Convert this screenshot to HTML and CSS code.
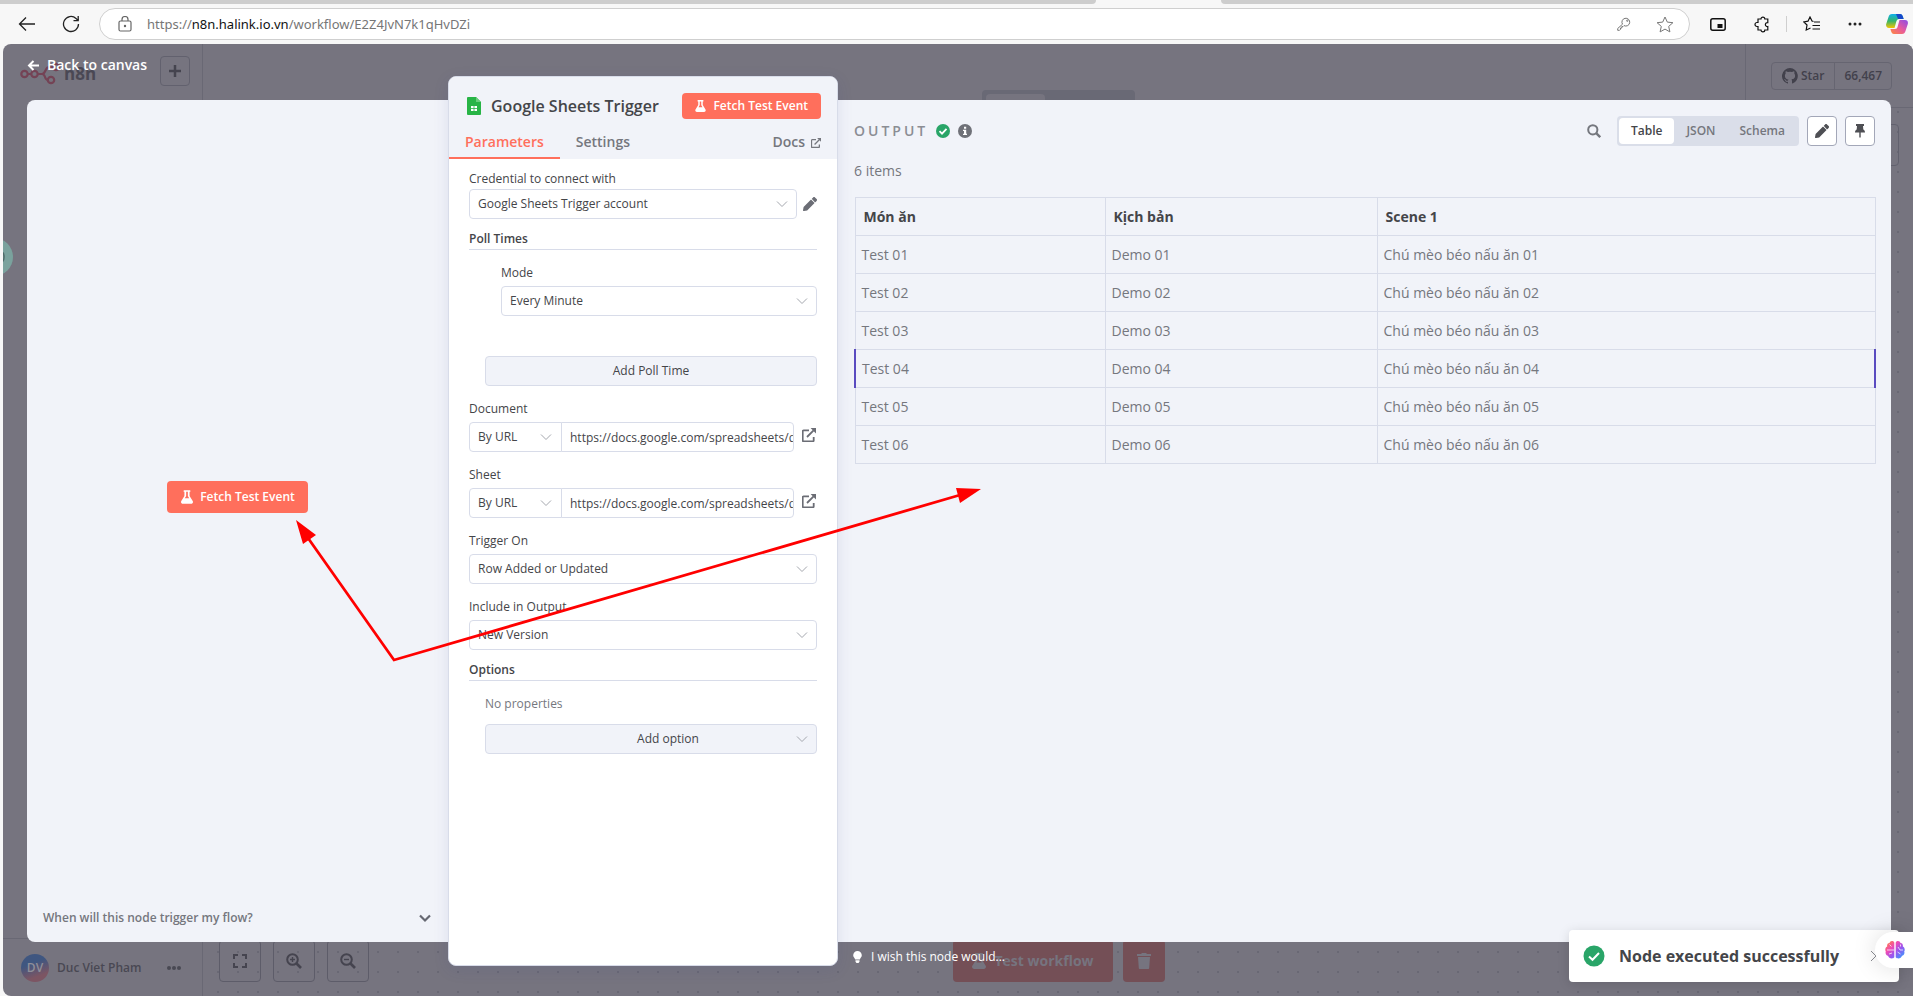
FILE: index.html
```html
<!DOCTYPE html>
<html lang="en">
<head>
<meta charset="utf-8">
<title>n8n - Google Sheets Trigger</title>
<link rel="stylesheet" href="styles.css">
</head>
<body>
<svg class="defs" aria-hidden="true">
  <symbol id="i-flask" viewBox="0 0 448 512"><path d="M437 404L320 215V64h8c13 0 24-11 24-24V24c0-13-11-24-24-24H120c-13 0-24 11-24 24v16c0 13 11 24 24 24h8v151L11 404c-29 47 5 108 60 108h306c55 0 89-61 60-108zM141 304l47-76c3-4 4-8 4-13V64h64v151c0 5 1 9 4 13l47 76z" fill="currentColor"/></symbol>
  <symbol id="i-pencil" viewBox="0 0 512 512"><path d="M498 142l-46 46c-5 5-13 5-17 0L324 77c-5-5-5-12 0-17l46-46c19-19 49-19 68 0l60 60c19 19 19 49 0 68zM284 100L22 362 0 486c-3 16 12 30 28 28l124-22 262-262c5-5 5-12 0-17L302 100c-5-5-13-5-18 0z" fill="currentColor"/></symbol>
  <symbol id="i-ext" viewBox="0 0 14 14"><path d="M7 2.3H1.6a.9.9 0 0 0-.9.9v9.2c0 .5.4.9.9.9h9.2c.5 0 .9-.4.9-.9V9M5 9l6.6-6.6" fill="none" stroke="currentColor" stroke-width="1.8"/><path d="M8.600 0H14v5.400z" fill="currentColor"/></symbol>
  <symbol id="i-chev" viewBox="0 0 12 12"><path d="M1 3.5l5 5 5-5" fill="none" stroke="currentColor"/></symbol>
</svg>

<header class="browser">
  <div class="tabstrip"><span></span><i></i><span></span></div>
  <div class="toolbar">
    <button class="nav" aria-label="Back"><svg width="18" height="16" viewBox="0 0 18 16" fill="none" stroke="#222" stroke-width="1.3"><path d="M17 8H2M8 1.5L1.5 8 8 14.500"/></svg></button>
    <button class="nav" aria-label="Refresh"><svg width="18" height="18" viewBox="0 0 18 18" fill="none" stroke="#222" stroke-width="1.3"><path d="M16.500 9A7.500 7.500 0 1 1 14 3.400L16 5.500M16.200 1v4.700h-4.700"/></svg></button>
    <div class="address">
      <svg width="14" height="16" viewBox="0 0 14 16" fill="none" stroke="#666" stroke-width="1.2"><rect x="1" y="5" width="12" height="10" rx="1.500"/><path d="M4 5V3.500a3 3 0 0 1 6 0V5"/><circle cx="7" cy="10" r=".6" fill="#555"/></svg>
      <p class="url">https://<b>n8n.halink.io.vn</b>/workflow/E2Z4JvN7k1qHvDZi</p>
      <svg width="14" height="14" viewBox="0 0 14 14" fill="none" stroke="#777"><path d="M5.500 7.200A3.900 3.900 0 1 1 7 8.600L6 9.600H4.800V11H3.500v1.300L2.500 13.300H.7V11.500z"/><circle cx="10.300" cy="3.700" r=".7"/></svg>
      <svg class="star" width="18" height="17" viewBox="0 0 18 17" fill="none" stroke="#777"><path d="M9 1l2.300 5.100 5.600.6-4.200 3.700 1.200 5.500L9 13.100 4.100 15.900l1.200-5.500L1.100 6.700l5.600-.6z"/></svg>
    </div>
    <div class="tools">
      <svg width="16" height="13" viewBox="0 0 16 13"><rect x=".8" y=".8" width="14.400" height="11.400" rx="2" fill="none" stroke="#111" stroke-width="1.500"/><rect x="7.500" y="6" width="5" height="4" fill="#111"/></svg>
      <svg width="16" height="17" viewBox="0 0 16 17" fill="none" stroke="#111" stroke-width="1.200"><path d="M4 3h3a1.900 1.900 0 0 1 3.800 0h3v3.600a2 2 0 1 0 0 3.900V14h-3a1.900 1.900 0 0 1-3.800 0H4v-3.500H3a2 2 0 0 1 0-4h1z"/></svg>
      <i class="sep"></i>
      <svg width="17" height="16" viewBox="0 0 17 16" fill="none" stroke="#111" stroke-width="1.200"><path d="M10.500 5.500L9 5 7 1 5 5.200l-4.200.7L4 9l-.8 5L7.500 12M11 6h6M9.500 9.500H17M9.500 13H17"/></svg>
      <svg width="14" height="4" viewBox="0 0 14 4" fill="#222"><circle cx="2" cy="2" r="1.500"/><circle cx="7" cy="2" r="1.500"/><circle cx="12" cy="2" r="1.500"/></svg>
      <svg class="copilot" width="22" height="20" viewBox="0 0 22 20">
        <defs><linearGradient id="c1" x2="0" y2="1"><stop stop-color="#0fb0ea"/><stop offset=".5" stop-color="#35b56a"/><stop offset="1" stop-color="#f5c400"/></linearGradient><linearGradient id="c2" x1="1" x2="0" y2="1"><stop stop-color="#8a4de8"/><stop offset=".5" stop-color="#e75a9e"/><stop offset="1" stop-color="#ff8a3c"/></linearGradient></defs>
        <path d="M6 0h8c2 0 2.500 1.500 3 3l.6 2H13c-1.500 0-2.200 1-2.600 2.300L8.500 14H3C.5 14-.3 12 .2 10L2.500 3C3.100 1 4 0 6 0z" fill="url(#c1)"/><path d="M10 0h4c2 0 2.500 1.500 3 3l.6 2H12z" fill="#1748c9"/>
        <path d="M16 20H8c-2 0-2.500-1.500-3-3l-.6-2H9c1.500 0 2.200-1 2.600-2.300L13.500 6H19c2.500 0 3.300 2 2.800 4L19.500 17c-.6 2-1.500 3-3.500 3z" fill="url(#c2)"/>
      </svg>
    </div>
  </div>
</header>

<main class="page">
  <div class="app">
    <aside class="sidebar">
      <div class="brand">
        <svg width="40" height="24" viewBox="0 0 40 24" fill="none" stroke="#744355" stroke-width="2.200"><circle cx="4.500" cy="13" r="3.200"/><circle cx="14.500" cy="13" r="3.200"/><circle cx="36" cy="6" r="3.200"/><circle cx="31" cy="19" r="3.200"/><path d="M8 13h3M18 13h4c4 0 3-7 7-7h4M22 13c4 0 2 6 6 6"/></svg>
        <b>n8n</b>
        <button aria-label="Add"><svg width="14" height="14" viewBox="0 0 14 14" stroke="#45444f" stroke-width="2.500"><path d="M7 1v12M1 7h12"/></svg></button>
      </div>
      <div class="user">
        <span class="avatar">DV</span><span>Duc Viet Pham</span>
        <svg width="14" height="4" viewBox="0 0 14 4" fill="#494853"><circle cx="2" cy="2" r="2"/><circle cx="7" cy="2" r="2"/><circle cx="12" cy="2" r="2"/></svg>
      </div>
    </aside>
    <section class="canvas">
      <div class="topbar">
        <div class="switch"><i></i></div>
        <div class="github"><span><svg width="16" height="16" viewBox="0 0 16 16" fill="#42414c"><path d="M8 0a8 8 0 0 0-2.500 15.600c.4 0 .5-.2.500-.4v-1.400c-2.200.5-2.700-1-2.700-1-.4-.9-.9-1.200-.9-1.200-.7-.5.100-.5.100-.5.800.1 1.200.8 1.200.8.700 1.300 1.900.9 2.300.7.100-.5.300-.9.500-1.100-1.800-.2-3.600-.9-3.600-4 0-.9.300-1.600.8-2.100-.1-.2-.4-1 .1-2.100 0 0 .7-.2 2.200.8a7.500 7.500 0 0 1 4 0c1.500-1 2.200-.8 2.200-.8.400 1.100.2 1.900.1 2.100.5.500.8 1.200.8 2.100 0 3.100-1.900 3.700-3.700 3.900.3.300.6.800.6 1.500v2.200c0 .2.100.5.600.4A8 8 0 0 0 8 0z"/></svg>Star</span><span>66,467</span></div>
      </div>
      <div class="edge"></div>
      <div class="controls">
        <button aria-label="Fit"><svg width="14" height="14" viewBox="0 0 14 14" fill="none" stroke="#45444f" stroke-width="2"><path d="M1 5V1h4M9 1h4v4M13 9v4H9M5 13H1V9"/></svg></button>
        <button aria-label="Zoom in"><svg width="16" height="16" viewBox="0 0 16 16" fill="none" stroke="#45444f" stroke-width="2"><circle cx="6.500" cy="6.500" r="5.300"/><path d="M10.500 10.500L15 15" stroke-width="2.600"/><path d="M6.500 4v5M4 6.500h5" stroke-width="1.400"/></svg></button>
        <button aria-label="Zoom out"><svg width="16" height="16" viewBox="0 0 16 16" fill="none" stroke="#45444f" stroke-width="2"><circle cx="6.500" cy="6.500" r="5.300"/><path d="M10.500 10.500L15 15" stroke-width="2.600"/><path d="M4 6.500h5" stroke-width="1.400"/></svg></button>
        <div class="run">
          <button class="red wide"><svg width="14" height="16"><use href="#i-flask"/></svg>Test workflow</button>
          <button class="red" aria-label="Delete"><svg width="14" height="16" viewBox="0 0 14 16" fill="currentColor"><path d="M0 1h4l1-1h4l1 1h4v2H0zM1 4h12l-.8 11c0 .6-.5 1-1 1H2.800c-.5 0-1-.4-1-1z"/></svg></button>
        </div>
      </div>
    </section>
    <i class="node"><svg width="38" height="38" viewBox="0 0 38 38" fill="none" stroke="#4e6a69" stroke-width="1.500"><path d="M26 14c4 0 4 10 0 10"/></svg></i>
  </div>

  <div class="overlay">
    <a class="back" href="#"><svg width="12" height="11" viewBox="0 0 12 11" fill="none" stroke="#fff" stroke-width="2"><path d="M12 5.500H2M6.500 1L2 5.500 6.500 10"/></svg>Back to canvas</a>
    <div class="modal">
      <section class="input">
        <div class="center"><button class="fetch tall"><svg width="12" height="14"><use href="#i-flask"/></svg>Fetch Test Event</button></div>
        <button class="help">When will this node trigger my flow?<svg width="12" height="12" viewBox="0 0 12 12" fill="none" stroke="#666872" stroke-width="2.200"><path d="M1 3.500l5 5 5-5"/></svg></button>
      </section>

      <section class="panel">
        <header>
          <div class="title">
            <svg width="14" height="18" viewBox="0 0 14 18"><path d="M1 0h8l5 5v12a1 1 0 0 1-1 1H1a1 1 0 0 1-1-1V1a1 1 0 0 1 1-1z" fill="#28b446"/><path d="M9 0l5 5H9z" fill="#6ace7c"/><path d="M4 9h6v5H4z" fill="#fff"/><path d="M4 11.500h6M7 9v5" stroke="#28b446" stroke-width=".8"/></svg>
            <h1>Google Sheets Trigger</h1>
            <button class="fetch"><svg width="11" height="12"><use href="#i-flask"/></svg>Fetch Test Event</button>
          </div>
          <nav class="tabs"><a class="on" href="#">Parameters</a><a href="#">Settings</a><a class="docs" href="#">Docs<svg width="10" height="10"><use href="#i-ext"/></svg></a></nav>
        </header>
        <form class="params">
          <label for="cred">Credential to connect with</label>
          <div class="row cred"><div class="sel"><select id="cred"><option>Google Sheets Trigger account</option></select><svg width="12" height="12"><use href="#i-chev"/></svg></div><svg class="act" width="14" height="14"><use href="#i-pencil"/></svg></div>
          <h2>Poll Times</h2>
          <div class="mode">
            <label for="mode">Mode</label>
            <div class="sel"><select id="mode"><option>Every Minute</option></select><svg width="12" height="12"><use href="#i-chev"/></svg></div>
          </div>
          <button type="button" class="add">Add Poll Time</button>
          <label for="doc">Document</label>
          <div class="row url-row"><div class="sel short"><select aria-label="Document mode"><option>By URL</option></select><svg width="12" height="12"><use href="#i-chev"/></svg></div><input id="doc" value="https://docs.google.com/spreadsheets/d/1"><svg class="act" width="14" height="14"><use href="#i-ext"/></svg></div>
          <label for="sheet">Sheet</label>
          <div class="row url-row"><div class="sel short"><select aria-label="Sheet mode"><option>By URL</option></select><svg width="12" height="12"><use href="#i-chev"/></svg></div><input id="sheet" value="https://docs.google.com/spreadsheets/d/1"><svg class="act" width="14" height="14"><use href="#i-ext"/></svg></div>
          <label for="on">Trigger On</label>
          <div class="sel"><select id="on"><option>Row Added or Updated</option></select><svg width="12" height="12"><use href="#i-chev"/></svg></div>
          <label for="inc">Include in Output</label>
          <div class="sel"><select id="inc"><option>New Version</option></select><svg width="12" height="12"><use href="#i-chev"/></svg></div>
          <h2>Options</h2>
          <p class="none">No properties</p>
          <div class="sel option"><select aria-label="Add option"><option>Add option</option></select><svg width="12" height="12"><use href="#i-chev"/></svg></div>
        </form>
      </section>

      <section class="output">
        <div class="head">
          <h2>OUTPUT</h2>
          <svg width="14" height="14" viewBox="0 0 14 14"><circle cx="7" cy="7" r="7" fill="#29a568"/><path d="M3.500 7.200L6 9.700l4.500-4.800" fill="none" stroke="#fff" stroke-width="1.800"/></svg>
          <svg width="14" height="14" viewBox="0 0 14 14"><circle cx="7" cy="7" r="7" fill="#6f7178"/><path d="M6 2.800h2.200v2H6zM5 5.800h3.200v4H9v1.300H5V9.800h1V7H5z" fill="#fff"/></svg>
          <span class="grow"></span>
          <svg width="14" height="14" viewBox="0 0 14 14" fill="none" stroke="#75777e" stroke-width="2"><circle cx="5.800" cy="5.800" r="4.600"/><path d="M9.200 9.200L13.200 13.200" stroke-width="2.400"/></svg>
          <div class="views"><button class="on">Table</button><button>JSON</button><button>Schema</button></div>
          <button class="sq" aria-label="Edit"><svg width="14" height="14"><use href="#i-pencil"/></svg></button>
          <button class="sq" aria-label="Pin"><svg width="10" height="14" viewBox="0 0 10 14" fill="currentColor"><path d="M1 0h8v2H8l.3 3.500C9.500 6.200 10 7 10 8.500H5.700V13L5 14l-.7-1V8.500H0C0 7 .5 6.200 1.700 5.500L2 2H1z"/></svg></button>
        </div>
        <p class="count">6 items</p>
        <table>
          <thead><tr><th class="c1">Món ăn</th><th class="c2">Kịch bản</th><th>Scene 1</th></tr></thead>
          <tbody>
            <tr><td>Test 01</td><td>Demo 01</td><td>Chú mèo béo nấu ăn 01</td></tr>
            <tr><td>Test 02</td><td>Demo 02</td><td>Chú mèo béo nấu ăn 02</td></tr>
            <tr><td>Test 03</td><td>Demo 03</td><td>Chú mèo béo nấu ăn 03</td></tr>
            <tr class="hl"><td>Test 04</td><td>Demo 04</td><td>Chú mèo béo nấu ăn 04</td></tr>
            <tr><td>Test 05</td><td>Demo 05</td><td>Chú mèo béo nấu ăn 05</td></tr>
            <tr><td>Test 06</td><td>Demo 06</td><td>Chú mèo béo nấu ăn 06</td></tr>
          </tbody>
        </table>
      </section>
    </div>
    <a class="wish" href="#"><svg width="9" height="12" viewBox="0 0 9 12" fill="#fff"><path d="M4.500 0a4.300 4.300 0 0 1 4.300 4.300C8.800 6 7.500 6.800 6.800 8.500H2.200C1.500 6.800.2 6 .2 4.300A4.300 4.300 0 0 1 4.500 0zM2.500 9.200h4v1.500L5.500 12h-2l-1-1.300z"/></svg>I wish this node would...</a>
  </div>

  <div class="toast" role="status">
    <svg width="22" height="22" viewBox="0 0 22 22"><circle cx="11" cy="11" r="10.500" fill="#29a568"/><path d="M6 11.500l3.500 3.300L16 8" fill="none" stroke="#fff" stroke-width="2"/></svg>
    <b>Node executed successfully</b>
    <svg width="7" height="12" viewBox="0 0 7 12" fill="none" stroke="#8a8c92"><path d="M1 1l5 5-5 5"/></svg>
  </div>
  <button class="brain" aria-label="Assistant"><svg width="20" height="20" viewBox="0 0 20 20"><defs><linearGradient id="b1" x2="1" y2="1"><stop stop-color="#ff8a2a"/><stop offset=".35" stop-color="#f04bb5"/><stop offset=".6" stop-color="#9a55f0"/><stop offset="1" stop-color="#25a8ff"/></linearGradient></defs><path d="M9.300 2.500C8 .2 5 .7 4.500 3 2.500 3 1.800 5 2.200 6.500.2 7.500-.2 10 .8 11.500 0 13.500 1.200 15.500 3 15.800c.5 2.400 4.500 3.800 6.300 1.500zM10.700 2.500C12 .2 15 .7 15.500 3c2 0 2.700 2 2.300 3.500 2 1 2.400 3.500 1.400 5 .8 2-.4 4-2.200 4.300-.5 2.400-4.500 3.800-6.300 1.500z" fill="url(#b1)"/><path d="M2 10h7M4.500 4.500l2 2M4 14l3-1M18 10h-3l-2-3M15.500 4.500v2M12.500 12l3 2" fill="none" stroke="#fff" stroke-width=".9" opacity=".8"/></svg></button>
</main>

<svg class="arrows" width="720" height="190" viewBox="290 480 720 190" aria-hidden="true"><path d="M308 538L394 660 960 495" fill="none" stroke="#f00" stroke-width="2.800"/><path d="M296 520l20 15-13 9zM981 489l-25-1 4 15z" fill="#f00"/></svg>
</body>
</html>
```
FILE: styles.css
```css
* { box-sizing: border-box; }
body { margin: 0; height: 100vh; display: flex; flex-direction: column; overflow: hidden; background: #f7f7f7; font: 14px/20px "Open Sans", "Noto Sans", sans-serif; color: #444549; }
button, input, select { font: inherit; color: inherit; margin: 0; border: 0; background: none; padding: 0; }
h1, h2, p { margin: 0; }
a { color: inherit; text-decoration: none; }
svg { flex: none; display: block; }
.defs { position: absolute; width: 0; height: 0; }

/* Browser chrome */
.browser { flex: none; height: 44px; }
.tabstrip { display: flex; height: 4px; }
.tabstrip span { flex: 1096; background: #cdcdcd; border-radius: 0 0 4px 0; }
.tabstrip i { flex: 125; }
.tabstrip span:last-child { flex: 692; border-radius: 0 0 0 4px; }
.toolbar { display: flex; align-items: center; height: 40px; padding: 0 5px 0 18px; }
.nav { width: 18px; margin-right: 26px; }
.nav + .nav { margin-right: 19px; }
.address { flex: 1; display: flex; align-items: center; height: 32px; padding: 0 15px 0 18px; border: 1px solid #cfcfcf; border-radius: 16px; background: #fff; }
.url { flex: 1; margin-left: 15px; font: 13px/20px "Noto Sans", sans-serif; color: #767676; }
.url b { font-weight: 400; color: #111; }
.star { margin-left: 25px; }
.tools { display: flex; align-items: center; gap: 28px; margin-left: 20px; }
.sep { width: 1px; height: 16px; margin: 0 -12px; background: #cfcfcf; }
.copilot { margin-left: -4px; }

/* Dimmed workflow page */
.page { flex: 1; position: relative; margin-left: 3px; border-radius: 8px 8px 0 8px; overflow: hidden; background: #76747f; }
.app { display: flex; height: 100%; color: #494853; }
.sidebar { width: 200px; display: flex; flex-direction: column; justify-content: space-between; border-right: 1px solid #696874; }
.brand { display: flex; align-items: center; padding: 12px 12px 0 17px; font-size: 17px; color: #4a4854; }
.brand svg { margin-top: 4px; }
.brand b { flex: 1; margin-left: 4px; padding-top: 6px; }
.brand button { width: 30px; height: 30px; border: 1px solid #62616e; border-radius: 4px; display: grid; place-items: center; }
.brand button svg { margin: 0; }
.user { display: flex; align-items: center; height: 58px; padding-left: 18px; border-top: 1px solid #696874; font-size: 12px; font-weight: 600; }
.avatar { width: 28px; height: 28px; margin-right: 8px; border-radius: 50%; background: linear-gradient(160deg, #3f5680 35%, #7c5563 75%); color: #8f8e99; line-height: 28px; text-align: center; }
.user svg { margin-left: 25px; }
.canvas { flex: 1; display: flex; flex-direction: column; background: radial-gradient(circle, #696874 0 1px, transparent 1px) 5px -2px / 20px 20px; }
.topbar { display: flex; align-items: flex-end; justify-content: flex-end; height: 64px; border-bottom: 1px solid #696874; background: #76747f; }
.switch { width: 153px; height: 17px; margin-right: 610px; padding: 4px; border-radius: 4px 4px 0 0; background: #696975; }
.switch i { display: block; width: 59px; height: 13px; border-radius: 4px 4px 0 0; background: #76747f; }
.github { align-self: stretch; display: flex; align-items: center; width: 168px; padding-left: 25px; border-left: 1px solid #696874; font-size: 12px; font-weight: 600; color: #42414c; }
.github span { display: flex; align-items: center; gap: 3px; height: 28px; padding: 0 10px; border: 1px solid #666571; border-radius: 4px 0 0 4px; }
.github span + span { margin-left: -1px; padding: 0 9px; border-radius: 0 4px 4px 0; }
.edge { align-self: flex-end; width: 40px; height: 42px; margin: 16px 14px 0 0; border: 1px solid #62616e; border-radius: 4px; }
.controls { display: flex; gap: 12px; margin-top: auto; padding: 0 0 14px 16px; }
.controls button { width: 42px; height: 42px; display: flex; align-items: center; justify-content: center; border: 1px solid #5d5c69; border-radius: 4px; }
.run { display: flex; gap: 10px; margin-left: 572px; }
.controls .red { border: 0; background: #744f56; color: #76747f; }
.controls .wide { width: 160px; gap: 8px; font-weight: 700; }
.node { position: absolute; left: -28px; top: 194px; width: 38px; height: 38px; border-radius: 50%; background: #7aa29d; }

/* Node details view */
.overlay { position: absolute; inset: 0; display: flex; flex-direction: column; padding: 0 22px 0 24px; }
.back { display: flex; align-items: center; gap: 8px; height: 42px; margin-bottom: 14px; font-weight: 600; color: #fff; }
.modal { flex: 1; display: grid; grid-template-columns: 421px 390px 1fr; border-radius: 8px; background: #f1f3f9; }
.input { display: flex; flex-direction: column; }
.center { flex: 1; display: grid; place-items: center; }
.fetch { display: flex; align-items: center; gap: 7px; height: 26px; padding: 0 13px; border-radius: 4px; background: #ff6f5c; color: #fff; font-size: 12px; font-weight: 600; }
.tall { height: 32px; padding-left: 14px; }
.help { display: flex; align-items: center; justify-content: space-between; height: 48px; padding: 0 17px 0 16px; font-size: 12px; font-weight: 600; color: #75777e; }
.wish { display: flex; align-items: center; gap: 9px; height: 30px; margin: 0 0 24px 826px; font-size: 12px; font-weight: 500; color: #fff; }
.panel { display: flex; flex-direction: column; margin: -24px 0; border: 1px solid #d8dce9; border-radius: 8px; overflow: hidden; background: #fff; box-shadow: 0 4px 16px #3344881c; }
.panel header { background: #f1f3f9; }
.title { display: flex; align-items: center; height: 57px; padding: 0 16px 0 18px; }
.title h1 { flex: 1; margin-left: 10px; font-size: 16px; font-weight: 600; }
.tabs { display: flex; font-weight: 600; color: #75777e; }
.tabs a { height: 25px; padding: 0 16px; line-height: 16px; }
.tabs .on { border-bottom: 2px solid #ff6f5c; color: #ff6f5c; }
.tabs .docs { display: flex; gap: 6px; margin-left: auto; }
.docs svg { margin-top: 4px; }
.params { display: flex; flex-direction: column; padding: 10px 20px; font-size: 12px; }
.params label { line-height: 20px; margin: 13px 0 3px; }
.params label:first-child { margin: 0; }
.sel { position: relative; display: flex; height: 30px; }
.sel select { flex: 1; width: 100%; padding: 0 26px 0 8px; border: 1px solid #d8dce9; border-radius: 4px; background: #fff; appearance: none; }
.sel svg { position: absolute; right: 9px; top: 9px; color: #a4a7ae; }
.row { display: flex; align-items: center; }
.row .act { color: #6b6d75; }
.cred .sel { flex: 1; margin-right: 6px; }
.url-row { padding-right: 1px; }
.url-row .act { margin-bottom: 4px; }
.short { width: 93px; }
.sel.short select { border-radius: 4px 0 0 4px; }
.short svg { right: 10px; }
.row input { flex: 1; min-width: 0; height: 30px; margin: 0 8px 0 -1px; padding-left: 8px; border: 1px solid #d8dce9; border-radius: 0 4px 4px 0; }
.params h2 { margin-top: 10px; border-bottom: 1px solid #d8dce9; font-size: 12px; line-height: 20px; font-weight: 600; }
.mode { display: flex; flex-direction: column; padding-left: 32px; }
.mode label:first-child { margin: 13px 0 3px; }
.add { height: 30px; margin: 40px 0 0 16px; border: 1px solid #d8dce9; border-radius: 4px; background: #f1f3f9; }
.none { margin: 13px 0 10px 16px; color: #75777e; }
.option { margin-left: 16px; }
.sel.option select { padding: 0 10px 0 44px; background: #f1f3f9; text-align: center; text-align-last: center; }

.output { padding: 16px; min-width: 0; }
.head { display: flex; align-items: center; height: 30px; gap: 8px; }
.head h2 { font-size: 14px; font-weight: 600; letter-spacing: 3px; color: #8b8d94; }
.grow { flex: 1; }
.views { display: flex; margin-left: 8px; padding: 2px; border-radius: 4px; background: #dadee9; font-size: 12px; font-weight: 600; color: #75777e; }
.views button { height: 26px; padding: 0 12px; border-radius: 4px; }
.views .on { background: #fff; color: #444549; }
.sq { width: 30px; height: 30px; display: grid; place-items: center; border: 1px solid #a3a7b8; border-radius: 4px; background: #fff; color: #4e4f54; }
.sq + .sq { margin-left: 0; }
.count { margin: 15px 0 16px; color: #75777e; }
table { width: calc(100% + 1px); border-collapse: collapse; table-layout: fixed; color: #75777e; }
th, td { height: 38px; padding: 0 6px; border: 1px solid #d8dce9; text-align: left; }
th { padding: 0 8px; font-weight: 700; color: #444549; }
.c1 { width: 250px; }
.c2 { width: 272px; }
.hl td:first-child { border-left: 2px solid #5a4bc0; }
.hl td:last-child { border-right: 2px solid #5a4bc0; }

.toast { position: absolute; right: 14px; bottom: 14px; display: flex; align-items: center; width: 330px; height: 52px; padding: 0 22px 0 14px; border-radius: 4px; background: #fff; box-shadow: 0 2px 12px #0002; font-size: 16px; }
.toast b { flex: 1; margin-left: 14px; }
.brain { position: absolute; right: 0; bottom: 28px; width: 38px; height: 36px; padding-left: 10px; border-radius: 18px 0 0 18px; background: #fff; box-shadow: 0 0 24px #0002; }
.arrows { position: absolute; left: 290px; top: 480px; pointer-events: none; }
```
